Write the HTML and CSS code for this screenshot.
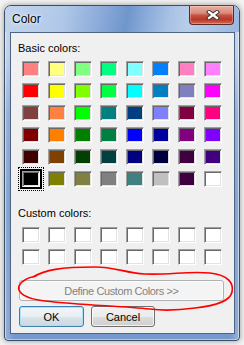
FILE: index.html
```html
<!DOCTYPE html>
<html>
<head>
<meta charset="utf-8">
<title>Color</title>
<link rel="stylesheet" href="styles.css">
</head>
<body>
<div class="window">
  <div class="titlebar">
    <span class="title">Color</span>
    <div class="close">
      <svg width="14" height="10" viewBox="0 0 14 10">
        <path d="M3 2 L11 8 M11 2 L3 8" stroke="#3b3b3b" stroke-width="4.2" stroke-linecap="square" fill="none"/>
        <path d="M3 2 L11 8 M11 2 L3 8" stroke="#fff" stroke-width="2.2" stroke-linecap="square" fill="none"/>
      </svg>
    </div>
  </div>
  <div class="client">
    <div class="label">Basic colors:</div>
    <div class="grid basic">
      <div class="sw" style="background:#FF8080"></div>
      <div class="sw" style="background:#FFFF80"></div>
      <div class="sw" style="background:#80FF80"></div>
      <div class="sw" style="background:#00FF80"></div>
      <div class="sw" style="background:#80FFFF"></div>
      <div class="sw" style="background:#0080FF"></div>
      <div class="sw" style="background:#FF80C0"></div>
      <div class="sw" style="background:#FF80FF"></div>

      <div class="sw" style="background:#FF0000"></div>
      <div class="sw" style="background:#FFFF00"></div>
      <div class="sw" style="background:#80FF00"></div>
      <div class="sw" style="background:#00FF40"></div>
      <div class="sw" style="background:#00FFFF"></div>
      <div class="sw" style="background:#0080C0"></div>
      <div class="sw" style="background:#8080C0"></div>
      <div class="sw" style="background:#FF00FF"></div>

      <div class="sw" style="background:#804040"></div>
      <div class="sw" style="background:#FF8040"></div>
      <div class="sw" style="background:#00FF00"></div>
      <div class="sw" style="background:#008080"></div>
      <div class="sw" style="background:#004080"></div>
      <div class="sw" style="background:#8080FF"></div>
      <div class="sw" style="background:#800040"></div>
      <div class="sw" style="background:#FF0080"></div>

      <div class="sw" style="background:#800000"></div>
      <div class="sw" style="background:#FF8000"></div>
      <div class="sw" style="background:#008000"></div>
      <div class="sw" style="background:#008040"></div>
      <div class="sw" style="background:#0000FF"></div>
      <div class="sw" style="background:#0000A0"></div>
      <div class="sw" style="background:#800080"></div>
      <div class="sw" style="background:#8000FF"></div>

      <div class="sw" style="background:#400000"></div>
      <div class="sw" style="background:#804000"></div>
      <div class="sw" style="background:#004000"></div>
      <div class="sw" style="background:#004040"></div>
      <div class="sw" style="background:#000080"></div>
      <div class="sw" style="background:#000040"></div>
      <div class="sw" style="background:#400040"></div>
      <div class="sw" style="background:#400080"></div>

      <div class="sw sel" style="background:#000000"></div>
      <div class="sw" style="background:#808000"></div>
      <div class="sw" style="background:#808040"></div>
      <div class="sw" style="background:#808080"></div>
      <div class="sw" style="background:#408080"></div>
      <div class="sw" style="background:#C0C0C0"></div>
      <div class="sw" style="background:#400040"></div>
      <div class="sw" style="background:#FFFFFF"></div>
    </div>
    <div class="label custom-label">Custom colors:</div>
    <div class="grid custom">
      <div class="sw"></div><div class="sw"></div><div class="sw"></div><div class="sw"></div>
      <div class="sw"></div><div class="sw"></div><div class="sw"></div><div class="sw"></div>
      <div class="sw"></div><div class="sw"></div><div class="sw"></div><div class="sw"></div>
      <div class="sw"></div><div class="sw"></div><div class="sw"></div><div class="sw"></div>
    </div>
    <button class="btn define" disabled>Define Custom Colors &gt;&gt;</button>
    <div class="actions">
      <button class="btn ok">OK</button>
      <button class="btn cancel">Cancel</button>
    </div>
  </div>
</div>
<svg class="annot" width="244" height="345" viewBox="0 0 244 345">
  <path d="M 33 277 C 45 270, 60 267, 95 267 C 115 267, 125 273, 145 274 C 170 275, 188 271, 210 273 C 228 275, 234 283, 232 292 C 230 302, 214 306, 195 308 C 180 310, 165 311, 150 309 C 120 306, 80 305, 45 301 C 26 299, 17 293, 19 286 C 21 281, 26 278, 36 276" fill="none" stroke="#ff0000" stroke-width="1.7" stroke-linecap="round"/>
</svg>
</body>
</html>
```

FILE: styles.css
```css
html, body {
  margin: 0;
  padding: 0;
}
body {
  width: 244px;
  height: 345px;
  overflow: hidden;
  position: relative;
  background: #f2f2f2;
  font-family: "Liberation Sans", Arial, sans-serif;
}
.window {
  box-sizing: border-box;
  margin: 5px 0 0 4px;
  width: 236px;
  height: 336px;
  border: 1px solid #3f4d63;
  border-radius: 7px 7px 4px 4px;
  background:
    linear-gradient(to right, rgba(255,255,255,0.25), rgba(255,255,255,0) 4%, rgba(255,255,255,0) 96%, rgba(255,255,255,0.25)),
    linear-gradient(to bottom, #bcd0ea 0, #b1c8e7 50px, #7ea1d3 110px, #6b92c9 200px, #7599cd 100%);
  box-shadow: 0 0 5px 1px rgba(0,0,0,0.28), inset 0 0 0 1px rgba(255,255,255,0.45);
  display: flex;
  flex-direction: column;
  overflow: hidden;
}
.titlebar {
  height: 26px;
  flex: none;
  display: flex;
  align-items: flex-start;
  background: linear-gradient(100deg, #c2d5ed 0%, #b0c8e8 25%, #88a8d8 42%, #6f96cc 52%, #8aabda 60%, #a9c2e5 70%, #b8cdea 78%, #9ab7e0 100%);
  border-radius: 6px 6px 0 0;
}
.title {
  margin: 6px 0 0 7px;
  font-size: 12px;
  line-height: 15px;
  color: #000;
  text-shadow: 0 0 5px rgba(255,255,255,0.9), 0 0 2px rgba(255,255,255,0.8);
}
.close {
  margin-left: auto;
  margin-right: 5px;
  width: 45px;
  height: 19px;
  box-sizing: border-box;
  border: 1px solid #5e2a24;
  border-top: none;
  border-radius: 0 0 4px 4px;
  background: linear-gradient(to bottom, #e9b0a3 0%, #d9897a 40%, #c8503f 52%, #b8392b 75%, #cf6a57 100%);
  box-shadow: inset 0 0 0 1px rgba(255,220,210,0.35);
  display: flex;
  align-items: center;
  justify-content: center;
}
.close svg {
  display: block;
  margin-left: 3px;
}
.client {
  box-sizing: border-box;
  margin: 0 4px 0 5px;
  flex: none;
  height: 302px;
  border: 1px solid #4f6482;
  background: #f0f0f0;
  padding: 9px 0 6px 7px;
  display: flex;
  flex-direction: column;
  align-items: flex-start;
  font-size: 11px;
  color: #000;
}
.label {
  line-height: 13px;
  height: 13px;
}
.custom-label {
  margin-top: 20px;
}
.grid {
  display: grid;
  grid-template-columns: repeat(8, 18px);
  grid-auto-rows: 16px;
  column-gap: 8px;
  row-gap: 6px;
  margin-left: 4px;
}
.grid.basic {
  margin-top: 6px;
}
.grid.custom {
  margin-top: 7px;
}
.sw {
  box-sizing: border-box;
  width: 18px;
  height: 16px;
  background: #fff;
  border: 1px solid;
  border-color: #a0a0a0 #ffffff #ffffff #a0a0a0;
  box-shadow: inset 1px 1px 0 #696969, inset -1px -1px 0 #e3e3e3;
  position: relative;
}
.sw.sel::before {
  content: "";
  position: absolute;
  left: -5px;
  top: -5px;
  right: -5px;
  bottom: -5px;
  border: 1px dotted #000;
}
.sw.sel::after {
  content: "";
  position: absolute;
  left: -3px;
  top: -3px;
  right: -3px;
  bottom: -3px;
  border: 2px solid #000;
}
.btn {
  box-sizing: border-box;
  height: 21px;
  margin: 0;
  padding: 0;
  font-family: "Liberation Sans", Arial, sans-serif;
  font-size: 11px;
  color: #000;
  border: 1px solid #707070;
  border-radius: 3px;
  background: linear-gradient(to bottom, #f2f2f2 0%, #ebebeb 50%, #dddddd 51%, #cfcfcf 100%);
  box-shadow: inset 0 0 0 1px rgba(255,255,255,0.75);
}
.define {
  margin-top: 15px;
  margin-left: 1px;
  width: 205px;
  border-color: #adb2b5;
  background: #f4f4f4;
  color: #838383;
  letter-spacing: -0.4px;
}
.actions {
  display: flex;
  gap: 7px;
  margin-top: 5px;
  margin-left: 1px;
}
.ok {
  width: 65px;
  border-color: #3c7fb1;
  box-shadow: inset 0 0 0 1px #a9e1f8;
  background: linear-gradient(to bottom, #f1f6f9 0%, #e8eff3 50%, #dae4ea 51%, #cdd8df 100%);
}
.cancel {
  width: 64px;
}
.annot {
  position: absolute;
  left: 0;
  top: 0;
  pointer-events: none;
}
```
